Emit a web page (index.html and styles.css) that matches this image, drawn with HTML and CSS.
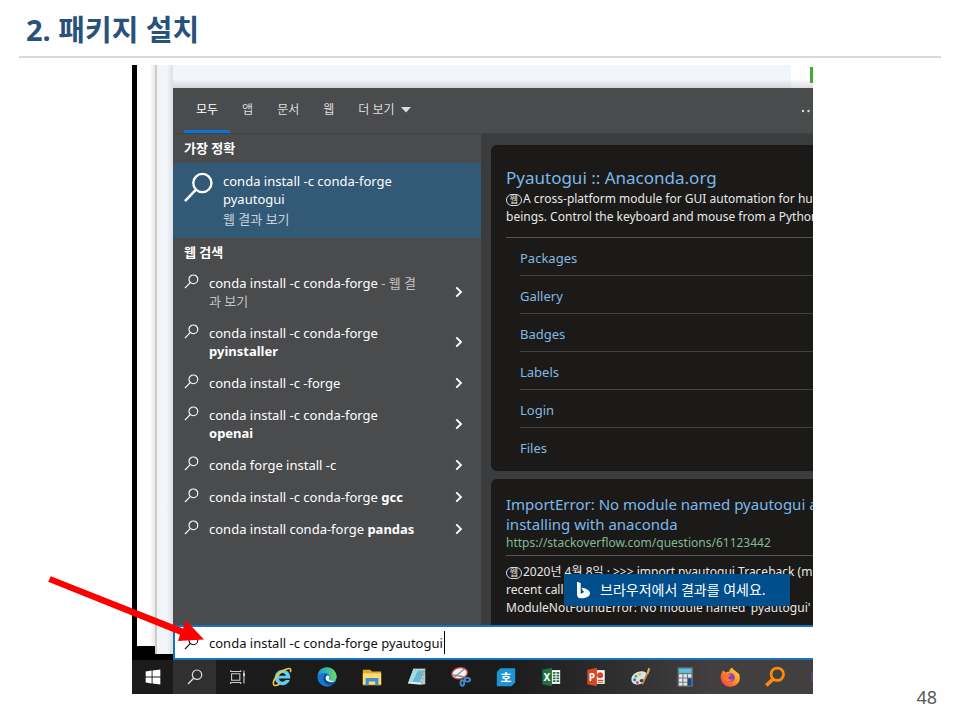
FILE: index.html
```html
<!DOCTYPE html>
<html lang="ko">
<head>
<meta charset="utf-8">
<title>2. 패키지 설치</title>
<link rel="stylesheet" href="styles.css">
</head>
<body>
<svg class="defs" aria-hidden="true">
  <symbol id="lens" viewBox="0 0 16 16"><circle cx="10" cy="5.7" r="4.7" fill="none" stroke="currentColor" stroke-width="1.2"/><path d="M6.6 9.2 1 15" fill="none" stroke="currentColor" stroke-width="1.3"/></symbol>
  <symbol id="chev" viewBox="0 0 8 12"><path d="M1.3 1.3 6 6l-4.700 4.700" fill="none" stroke="currentColor" stroke-width="1.9"/></symbol>
</svg>
<main class="slide">
  <h1 class="title">2. 패키지 설치</h1>
  <section class="shot">
    <div class="screen">
      <div class="desktop">
        <div class="window-edge"></div>
        <div class="page-edge"></div>
        <div class="main">
          <div class="behind"><span class="behind-side"></span></div>
          <div class="panel">
            <nav class="tabs">
              <button class="tab active">모두</button>
              <button class="tab">앱</button>
              <button class="tab">문서</button>
              <button class="tab">웹</button>
              <button class="tab">더 보기<svg class="caret" viewBox="0 0 10 6"><path d="M0 0h10L5 5.500z" fill="currentColor"/></svg></button>
              <button class="more" aria-label="옵션"><svg viewBox="0 0 16 4"><g fill="currentColor"><circle cx="2" cy="2" r="1.200"/><circle cx="7.500" cy="2" r="1.200"/><circle cx="13" cy="2" r="1.200"/></g></svg></button>
            </nav>
            <div class="columns">
              <div class="results">
                <h2 class="group">가장 정확</h2>
                <a class="best" href="#best">
                  <svg class="best-icon"><use href="#lens"/></svg>
                  <span>conda install -c conda-forge<br>pyautogui<small>웹 결과 보기</small></span>
                </a>
                <h2 class="group">웹 검색</h2>
                <ul class="list">
                  <li><a href="#r1"><svg class="lens"><use href="#lens"/></svg><span class="label">conda install -c conda-forge <i>- 웹 결<br>과 보기</i></span><svg class="chev"><use href="#chev"/></svg></a></li>
                  <li><a href="#r2"><svg class="lens"><use href="#lens"/></svg><span class="label">conda install -c conda-forge<br><b>pyinstaller</b></span><svg class="chev"><use href="#chev"/></svg></a></li>
                  <li><a href="#r3"><svg class="lens"><use href="#lens"/></svg><span class="label">conda install -c -forge</span><svg class="chev"><use href="#chev"/></svg></a></li>
                  <li><a href="#r4"><svg class="lens"><use href="#lens"/></svg><span class="label">conda install -c conda-forge<br><b>openai</b></span><svg class="chev"><use href="#chev"/></svg></a></li>
                  <li><a href="#r5"><svg class="lens"><use href="#lens"/></svg><span class="label">conda forge install -c</span><svg class="chev"><use href="#chev"/></svg></a></li>
                  <li><a href="#r6"><svg class="lens"><use href="#lens"/></svg><span class="label">conda install -c conda-forge <b>gcc</b></span><svg class="chev"><use href="#chev"/></svg></a></li>
                  <li><a href="#r7"><svg class="lens"><use href="#lens"/></svg><span class="label">conda install conda-forge <b>pandas</b></span><svg class="chev"><use href="#chev"/></svg></a></li>
                </ul>
              </div>
              <div class="preview">
                <article class="card">
                  <h3><a href="#anaconda">Pyautogui :: Anaconda.org</a></h3>
                  <p><span class="web">웹</span>A cross-platform module for GUI automation for hum<br>beings. Control the keyboard and mouse from a Python</p>
                  <ul class="links">
                    <li><a href="#packages">Packages</a></li>
                    <li><a href="#gallery">Gallery</a></li>
                    <li><a href="#badges">Badges</a></li>
                    <li><a href="#labels">Labels</a></li>
                    <li><a href="#login">Login</a></li>
                    <li><a href="#files">Files</a></li>
                  </ul>
                </article>
                <article class="card second">
                  <h3><a href="#error">ImportError: No module named pyautogui a<br>installing with anaconda</a></h3>
                  <a class="url" href="#so">https://stackoverflow.com/questions/61123442</a>
                  <p class="snippet"><span class="web">웹</span>2020년 4월 8일 · &gt;&gt;&gt; import pyautogui Traceback (m<br>recent call<br>ModuleNotFoundError: No module named 'pyautogui' .</p>
                </article>
                <button class="toast"><svg viewBox="0 0 14 18"><path d="M0 0 4 1.400v11.800L8 10.900 6.200 9.900 4.900 6.200C9 7.400 14 8.300 14 12.800 14 16 9.500 18 5 18 1.800 18 0 16.500 0 14z" fill="#fff"/></svg>브라우저에서 결과를 여세요.</button>
              </div>
            </div>
          </div>
          <label class="search"><svg class="lens"><use href="#lens"/></svg><input type="text" aria-label="검색" value="conda install -c conda-forge pyautogui"></label>
        </div>
      </div>
      <div class="taskbar">
        <button class="start" aria-label="시작"><svg viewBox="0 0 24 24"><path d="M4 6 10.500 5v6.500H4zM11.500 4.900 20 3.700v7.800h-8.500zM4 12.500h6.500V19L4 18zM11.500 12.500H20v7.800l-8.500-1.200z" fill="#fff"/></svg></button>
        <button class="find" aria-label="검색"><svg class="lens"><use href="#lens"/></svg></button>
        <button class="view" aria-label="작업 보기"><svg viewBox="0 0 24 24"><g fill="none" stroke="#ccc" stroke-width="1.200"><path d="M5 8.500h9v7H5zM4 4.500v1.500h11V4.500M4 19.500V18h11v1.500M18.500 5v14"/></g><path d="M17.500 8h2v3h-2z" fill="#ddd"/></svg></button>
        <div class="apps">
          <button aria-label="Internet Explorer"><svg viewBox="0 0 24 24"><path fill="#61cdf5" d="M12.500 4a8.500 8.500 0 1 0 8.100 11.300h-4.700c-2.200 3.200-7 2-7.100-1.800H21C21.400 7.500 17.500 4 12.500 4zM8.900 10.700c.6-3.800 6.500-4.200 7.300 0z"/><path d="M3.300 20.800c-2.300-2.100 1.300-9.600 7.200-14 4.500-3.400 9.600-5 10.700-3.500.6.800.4 2.200-.2 3.500M3.300 20.800c1.300 1.100 3.800.2 6.200-1.200" fill="none" stroke="#f6c52e" stroke-width="1.800"/></svg></button>
          <button aria-label="Edge"><svg viewBox="0 0 24 24"><defs><linearGradient id="eg" x2="1"><stop stop-color="#1793dc"/><stop offset="1" stop-color="#6bdc62"/></linearGradient></defs><circle cx="12" cy="12" r="10.500" fill="#1478cd"/><path d="M1.700 10.500C3-2 21-1.500 22.500 11c.2 4-3 6-6.500 5.500-2.500-.3-3-1.600-2-2.800 2-3.500-1-6-4-6-4 0-7 1-8.300 2.800z" fill="url(#eg)"/><path d="M9.500 9.500c-3.500 4-.5 11 6 11 3 0 5-1.500 6-3.300-3 2-9 1.600-9.500-2.700-.1-2 .7-2.600 1.300-3.300-.4-2-2-2.600-3.800-1.700z" fill="#0c4c95"/><path d="M11.500 10.600c-1.500 1.500-1.300 4 .2 5.300 3 2.500 7.300 1.800 9.800-.4-2.200 1-6 1.200-7.400-.4-.8-1.200.5-1.600.3-3.200-.3-1.500-1.800-2.100-2.900-1.300z" fill="#fff"/></svg></button>
          <button aria-label="파일 탐색기"><svg viewBox="0 0 24 24"><path d="M2 4h8l2 2h10v15H2z" fill="#e5a92d"/><path d="M2 8h20v12H2z" fill="#ffdc73"/><path d="M5 13h14v8h-3.500v-4h-7v4H5z" fill="#3c8fd2"/></svg></button>
          <button aria-label="메모장"><svg viewBox="0 0 24 24"><path d="M8 3h13l-5 17.500L2 19z" fill="#d9f1f5"/><path d="m8 5 12.300-.4L15.500 18 3 17z" fill="#68b9cb"/><path d="m8 5 5-.2L7 17.500 3 17z" fill="#a6dbe3"/><path d="M21 3v17l-5 .500z" fill="#b9c7ca"/><path d="M8 3h13" stroke="#777" stroke-width="1.500" stroke-dasharray="1 1"/></svg></button>
          <button aria-label="캡처 도구"><svg viewBox="0 0 24 24"><ellipse cx="10.500" cy="8" rx="8.500" ry="6" transform="rotate(-12 10.500 8)" fill="#f7f5f5" stroke="#d0434c" stroke-width="1.400"/><path d="M2.500 9.500 16 12M5 12l11-9" stroke="#8b8e94" stroke-width="1.500"/><g fill="none" stroke="#3d8fd0" stroke-width="2"><ellipse cx="13.500" cy="18.500" rx="2" ry="3"/><ellipse cx="19" cy="15" rx="3" ry="2"/></g></svg></button>
          <button aria-label="한글"><svg viewBox="0 0 24 24"><path d="M6 2.500h16V18l-4 4H2V6.500z" fill="#1e94d7"/><text x="12" y="17" text-anchor="middle" class="hangul">호</text></svg></button>
          <button aria-label="Excel"><svg viewBox="0 0 24 24"><path d="M12 4.500h10v15H12z" fill="#fff"/><path d="M14 6.500h3v2h-3zM18 6.500h3v2h-3zM14 9.500h3v2h-3zM18 9.500h3v2h-3zM14 12.500h3v2h-3zM18 12.500h3v2h-3zM14 15.500h3v2h-3zM18 15.500h3v2h-3z" fill="#207245"/><path d="M2.500 4 13 2v20L2.500 20z" fill="#207245"/><text x="7.500" y="16" text-anchor="middle" class="office">X</text></svg></button>
          <button aria-label="PowerPoint"><svg viewBox="0 0 24 24"><path d="M12 4.500h9.500v15H12z" fill="#fff"/><circle cx="16.500" cy="10" r="3.300" fill="#d24726"/><path d="M14 15h6v1.300h-6zM14 17.300h6v1h-6z" fill="#d24726"/><path d="M2.500 4 13 2v20L2.500 20z" fill="#d24726"/><text x="7.500" y="16" text-anchor="middle" class="office">P</text></svg></button>
          <button aria-label="그림판"><svg viewBox="0 0 24 24"><path d="M1.500 15C1 9 9 4.500 15 6c4 1 4 4 2 6.500-1.500 2-.5 3-2 5-3 4-13 4-13.500-2.500z" fill="#d7e2ea"/><ellipse cx="13" cy="16" rx="2.500" ry="1.700" fill="#403f3f"/><circle cx="5" cy="15" r="1.700" fill="#3275c4"/><circle cx="6.500" cy="11.300" r="1.500" fill="#53a846"/><circle cx="10.500" cy="9" r="1.500" fill="#e8b42d"/><circle cx="8" cy="18" r="1.500" fill="#cf4840"/><path d="m13.500 20 6-13" stroke="#c5843d" stroke-width="1.800"/><path d="m18 8 2-6 2 1-2 6z" fill="#d7af77"/></svg></button>
          <button aria-label="계산기"><svg viewBox="0 0 24 24"><path d="M4 1.500h16.500v21H4z" fill="#6d7880"/><path d="M5.500 3H19v4.500H5.500z" fill="#58c3e4"/><path d="M5.500 9h3.700v3.500H5.500zM10.400 9h3.700v3.500h-3.700zM15.300 9H19v3.500h-3.700zM5.500 13.700h3.700v3.500H5.500zM10.400 13.700h3.700v3.500h-3.700zM5.500 18.400h3.700v3h-3.700zM10.400 18.400h3.700v3h-3.700z" fill="#e6eaed"/><path d="M15.300 13.700H19v7.700h-3.700z" fill="#174a82"/></svg></button>
          <button aria-label="Firefox"><svg viewBox="0 0 24 24"><defs><linearGradient id="ff" x1="1" x2="0" y2="1"><stop stop-color="#ffe34b"/><stop offset=".5" stop-color="#ff8a23"/><stop offset="1" stop-color="#f03053"/></linearGradient></defs><path d="M4.500 4.500 7 7c2-1 3-.8 4-.5.400-2.500 1.500-4 3.500-5 .3 3 5.500 4 6.500 7l.6-1c4 11-4 15-9.600 15C4.500 22.500 0 15 2.500 8.500z" fill="url(#ff)"/><circle cx="12.500" cy="12.500" r="4.700" fill="#8442c5"/><path d="M5.500 9c3-1.500 5 .2 7.500.5-.5 1.800-3 1.500-3 3.300s3 2.700 5 1c-1 4-8.500 4-9.500-1z" fill="#ff7632"/></svg></button>
          <button aria-label="Everything"><svg viewBox="0 0 24 24"><circle cx="14.500" cy="9" r="6.800" fill="none" stroke="#ff8a08" stroke-width="3"/><path d="m10 14-7.500 7.300" stroke="#ff8a08" stroke-width="4"/></svg></button>
          <button aria-label="Visual Studio"><svg viewBox="0 0 24 24"><path d="m12 2 9 5v10l-9 5-9-5V7z" fill="#7757b5"/><path d="m3 7 9 5v10l-9-5z" fill="#5b3b99"/></svg></button>
        </div>
      </div>
    </div>
    <svg class="arrow" viewBox="0 0 160 70" aria-hidden="true"><path d="M2.800.2 135 52.600 138 44.500 156 63.500 130 65 132 58.800.2 5.800z" fill="#f00"/></svg>
  </section>
  <footer class="page">48</footer>
</main>
</body>
</html>
```

FILE: styles.css
```css
* { box-sizing: border-box; }
body { margin: 0; background: #fff; font: 13px/18px "Noto Sans", "Noto Sans CJK KR", sans-serif; }
button, input { font: inherit; color: inherit; border: 0; padding: 0; margin: 0; background: none; }
a { color: inherit; text-decoration: none; }
ul, h2, h3, p { margin: 0; padding: 0; list-style: none; }
svg { display: block; flex: none; }
.defs { position: absolute; width: 0; height: 0; }

.slide { padding: 0 19px; }
.title { margin: 0 0 7px; padding: 8px 7px 4px; height: 58px; border-bottom: 2px solid #d9d9d9; color: #28527a; font-size: 29px; line-height: 44px; font-weight: 700; white-space: nowrap; }
.page { padding: 0 4px; margin-top: -8px; text-align: right; color: #595959; font-size: 18px; line-height: 22px; }

.shot { position: relative; margin: 0 128px 0 113px; }
.screen { overflow: hidden; background: #000; color: #fff; white-space: nowrap; }
.arrow { position: absolute; left: -84px; bottom: 48px; width: 160px; height: 70px; }

.desktop { display: flex; padding-left: 5px; height: 595px; }
.window-edge { width: 18px; margin-bottom: 14px; background: linear-gradient(90deg, #fff 70%, #e8e8e8); }
.page-edge { width: 18px; margin-bottom: 6px; border-left: 2px solid #ccc; background: linear-gradient(90deg, #f2f6fa 60%, #dde1e5); }
.main { flex: 1; min-width: 0; display: flex; flex-direction: column; }
.behind { flex: none; height: 23px; display: flex; justify-content: flex-end; background: linear-gradient(#f2f6fa 60%, #d4d8dc); }
.behind-side { width: 22px; background: linear-gradient(#fff 60%, #ddd); }
.behind-side::after { content: ""; display: block; width: 3px; height: 16px; margin: 2px 0 0 auto; background: #43ab35; }

.panel { flex: 1; min-height: 0; display: flex; flex-direction: column; background: #4a4b4d; }
.tabs { flex: none; height: 46px; display: flex; padding-left: 11px; border-bottom: 1px solid #414244; color: #ddd; font-size: 12px; }
.tab { display: flex; align-items: center; padding: 0 12px; border-bottom: 3px solid transparent; border-top: 2px solid transparent; }
.tab.active { border-bottom-color: #0c72d0; color: #fff; }
.caret { width: 10px; height: 6px; margin-left: 6px; }
.more { margin-left: auto; margin-right: -4px; }
.more svg { width: 16px; height: 4px; }

.columns { flex: 1; min-height: 0; display: flex; }
.results { width: 308px; flex: none; }
.group { padding: 0 11px; font-size: 13px; line-height: 29px; font-weight: 700; }
.best { display: flex; height: 75px; padding: 9px 10px; background: #325976; }
.best-icon { width: 31px; height: 31px; margin-right: 9px; }
.best small { display: block; margin-top: 2px; font-size: 13px; color: #c9d3dc; }
.list a { display: flex; padding: 7px 18px 7px 11px; }
.lens { width: 15px; height: 15px; }
.label { flex: 1; margin-left: 10px; }
.label i { font-style: normal; color: #c3c3c4; }
.chev { width: 8px; height: 12px; align-self: center; }

.preview { position: relative; flex: 1; min-width: 0; padding: 11px 0 0 10px; overflow: hidden; background: #3b3c3e; }
.card { height: 326px; margin-bottom: 8px; padding: 22px 0 0 15px; border-radius: 6px 0 0 6px; background: #1b1a19; color: #e8e8e8; font-size: 12px; }
.card h3 { margin-bottom: 1px; color: #7cb8ea; font-size: 17px; line-height: 22px; font-weight: 400; }
.card.second { padding-top: 15px; }
.card.second h3 { margin: 0; font-size: 15px; line-height: 20px; }
.web { display: inline-block; width: 16px; height: 12px; margin-right: 1px; border: 1px solid #ddd; border-radius: 6px; font-size: 9px; line-height: 10px; text-align: center; vertical-align: 0; }
.links { margin-top: 11px; padding-left: 14px; border-top: 1px solid #555; color: #83b8e0; font-size: 13px; }
.links li { height: 38px; padding-top: 11px; border-bottom: 1px solid #444; }
.links li:last-child { border: 0; }
.url { display: block; color: #84b894; }
.snippet { margin-top: 3px; padding-top: 7px; border-top: 1px solid #555; }
.toast { position: absolute; right: 23px; bottom: 19px; display: flex; align-items: center; width: 226px; height: 32px; padding-left: 13px; background: #004e8c; color: #fff; font-size: 14px; }
.toast svg { width: 13px; height: 18px; margin-right: 10px; }

.search { flex: none; display: flex; align-items: center; height: 35px; padding-left: 9px; border: 2px solid #1a72be; border-right: 0; background: #fff; color: #111; }
.search input { width: 236px; height: 23px; margin-left: 10px; border-right: 1px solid #000; outline: 0; }

.taskbar { display: flex; height: 34px; background: linear-gradient(90deg, #1b1b1b 55%, #413f3f 85%); }
.taskbar button { display: flex; align-items: center; justify-content: center; }
.taskbar svg { width: 22px; height: 22px; }
.start { width: 41px; }
.find { width: 43px; background: #303030; color: #ddd; }
.taskbar .lens { width: 16px; height: 16px; }
.view { width: 44px; }
.apps { flex: 1; display: grid; grid-template-columns: repeat(13, 1fr); margin-right: -29px; }
.office { fill: #fff; font: 700 11px "Noto Sans", sans-serif; }
.hangul { fill: #fff; font: 700 13px "Noto Sans CJK KR", sans-serif; }
```
